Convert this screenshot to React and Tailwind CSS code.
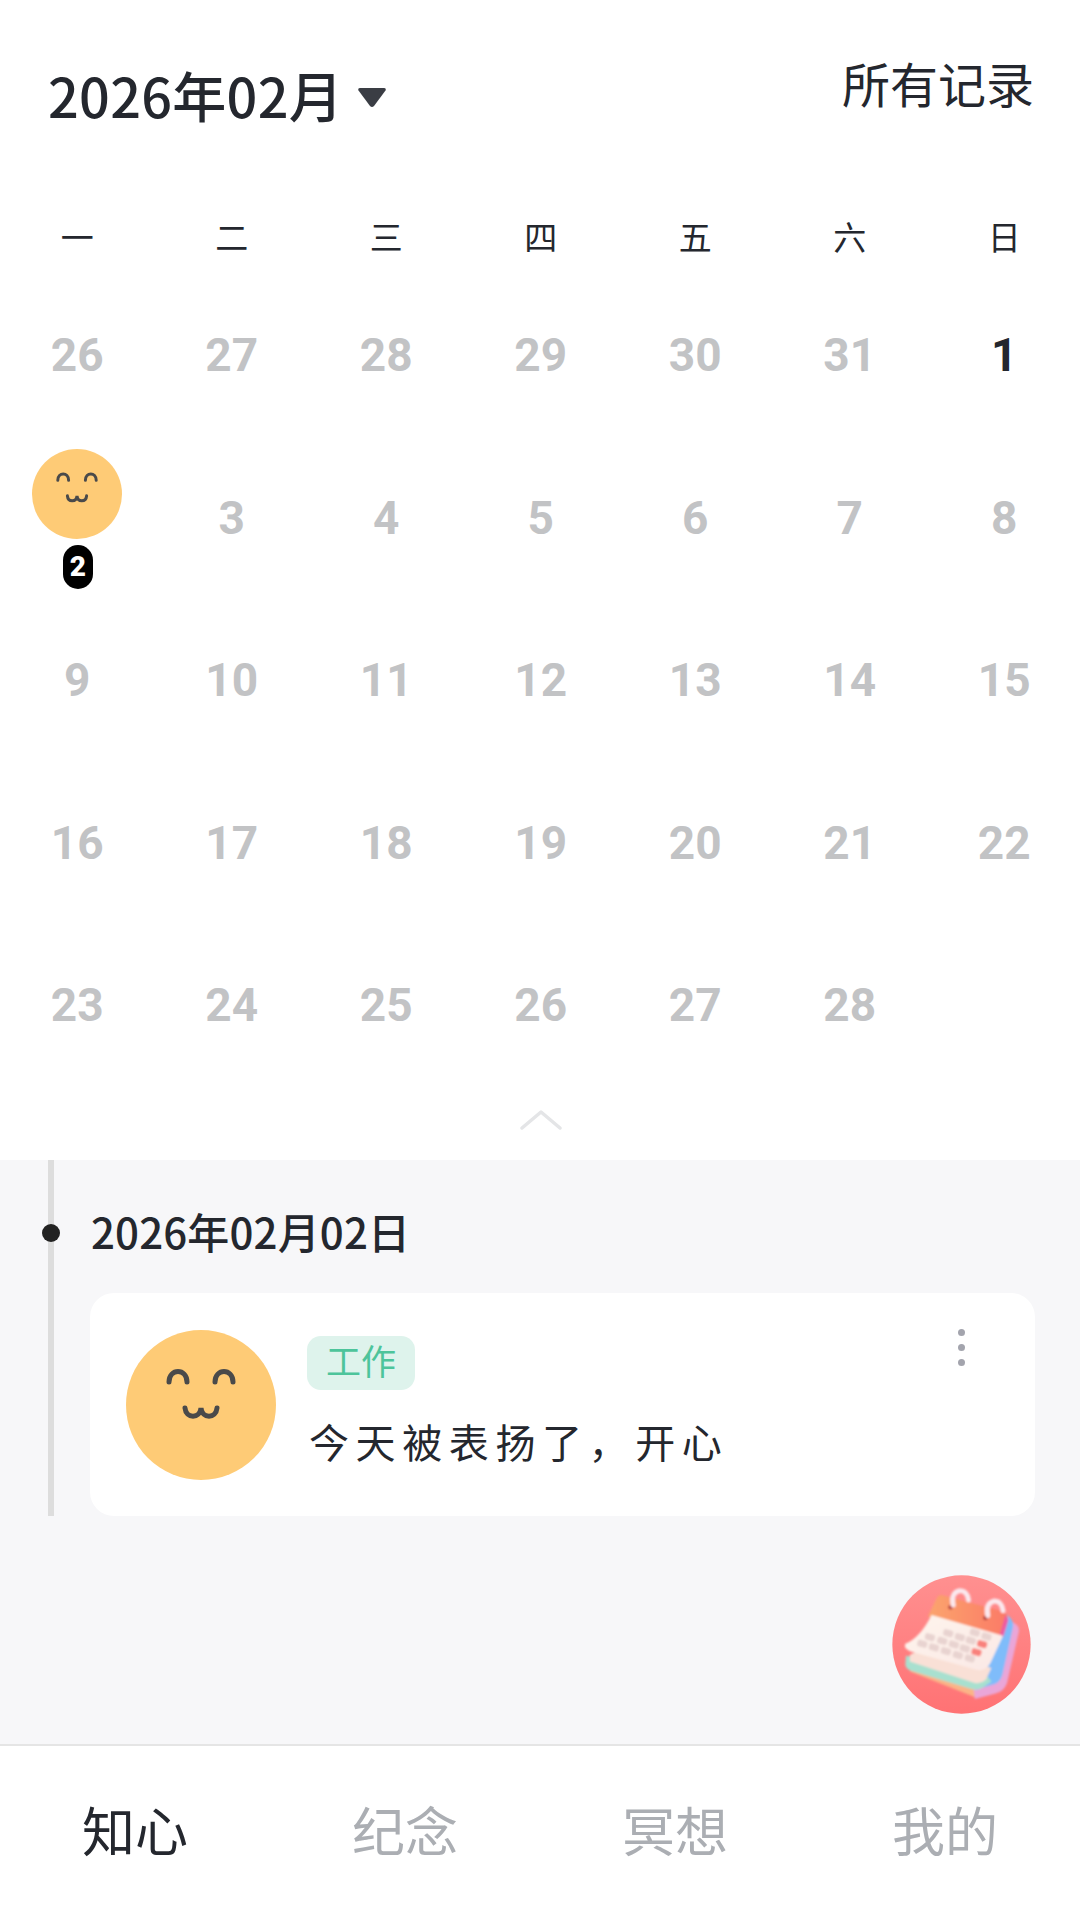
const weekdays = ["一", "二", "三", "四", "五", "六", "日"]

const days = [
  26, 27, 28, 29, 30, 31, 1,
  2, 3, 4, 5, 6, 7, 8,
  9, 10, 11, 12, 13, 14, 15,
  16, 17, 18, 19, 20, 21, 22,
  23, 24, 25, 26, 27, 28, null,
]

const tabs = ["知心", "纪念", "冥想", "我的"]

const cells = [
  [187, 282], [222, 293], [258, 304], [294, 316], [330, 326],
  [210, 262], [247, 273], [282, 284], [315, 296], [350, 307],
  [265, 250], [300, 262], [333, 272], [367, 283],
  [345, 248], [380, 260],
]

function Face({ className }) {
  return (
    <svg viewBox="0 0 150 150" className={className}>
      <circle cx="75" cy="75" r="75" fill="#fecb76" />
      <g fill="none" stroke="#4a4a4a" strokeWidth="5" strokeLinecap="round">
        <path d="M43 52c0-14 18-14 18 0" />
        <path d="M89 52c0-14 18-14 18 0" />
        <path d="M59 78c1 11 15 11 16 0c1 11 15 11 16 0" />
      </g>
    </svg>
  )
}

function CalendarFab({ className }) {
  return (
    <svg viewBox="97 75 416 418" className={className}>
      <defs>
        <linearGradient id="fabBg" x1="0" y1="0" x2="0" y2="1">
          <stop offset="0" stopColor="#ff9090" />
          <stop offset="1" stopColor="#ff7274" />
        </linearGradient>
        <linearGradient id="head" x1="0" y1="0" x2="1" y2="0">
          <stop offset="0" stopColor="#fba56e" />
          <stop offset="1" stopColor="#fb7a66" />
        </linearGradient>
        <linearGradient id="sheet" x1="0" y1="0" x2="1" y2="1">
          <stop offset="0" stopColor="#fef5ec" />
          <stop offset="1" stopColor="#fbe8e6" />
        </linearGradient>
        <filter id="soft"><feGaussianBlur stdDeviation="3" /></filter>
      </defs>
      <circle cx="305" cy="284" r="208" fill="url(#fabBg)" />
      <g filter="url(#soft)">
        <path d="M150 365L335 438Q355 450 385 432L420 412L395 370L160 330Z" fill="#fbb487" />
        <path d="M440 205L468 222Q482 232 476 252L442 400Q432 428 405 432L345 448L340 400Z" fill="#eaa6d8" />
        <path d="M438 190L452 204Q464 218 459 236L428 375Q420 402 395 406L350 420L345 380Z" fill="#7fbcfa" />
        <path d="M138 318L136 345Q138 358 155 364L335 418Q355 424 372 412L395 395L360 350Z" fill="#a8e0cf" />
        <path d="M150 315L150 335L345 400Q362 404 378 390L395 355L200 290Z" fill="#f9e0d6" />
        <path d="M245 135L425 183Q448 190 444 212L428 262L204 200L228 150Q234 134 245 135Z" fill="url(#head)" />
        <path d="M437 195L446 210L430 262L420 255Z" fill="#ef5aa0" />
        <path d="M215 195L430 258L392 340Q378 366 350 360L150 304Q130 296 136 282Q182 262 215 195Z" fill="url(#sheet)" />
        {cells.map(([x, y], i) => (
          <rect
            key={i}
            x={x - 15}
            y={y - 10}
            width="30"
            height="20"
            rx="6"
            transform={`rotate(16 ${x} ${y})`}
            fill={i === 9 || i === 13 ? "#f9817b" : "#e8d3d0"}
          />
        ))}
        <circle cx="272" cy="172" r="7" fill="#b8443f" />
        <circle cx="377" cy="204" r="7" fill="#b8443f" />
        <path d="M280 165Q272 128 300 122Q322 122 326 150" fill="none" stroke="#fbe8ee" strokeWidth="15" strokeLinecap="round" />
        <path d="M384 197Q376 160 404 153Q426 153 430 182" fill="none" stroke="#fbe8ee" strokeWidth="15" strokeLinecap="round" />
      </g>
    </svg>
  )
}

export default function App() {
  return (
    <div className="w-[1080px] h-[1920px] bg-white flex flex-col overflow-hidden font-['Noto_Sans_CJK_SC',sans-serif] text-[#24272e]">
      <div className="h-[199px] flex justify-between items-start pl-[48px] pr-[46px] pt-[46px]">
        <div className="flex items-center mt-[7px]">
          <span className="text-[54px] leading-[84px] font-medium tracking-[0.3px]">2026年02月</span>
          <svg viewBox="0 0 30 22" className="w-[30px] h-[22px] ml-[14px] mt-[4px]">
            <path d="M3 2h24q2.500 0 1.500 2.500L17 20q-2 2-4 0L1.500 4.500Q.5 2 3 2z" fill="#3a3d44" />
          </svg>
        </div>
        <span className="text-[48px] leading-[72px]">所有记录</span>
      </div>

      <div className="grid grid-cols-[repeat(7,154.5px)] h-[75px] items-center">
        {weekdays.map((d) => (
          <div key={d} className="text-center text-[33px] leading-[75px]">{d}</div>
        ))}
      </div>

      <div className="grid grid-cols-[repeat(7,154.5px)] auto-rows-[162.5px]">
        {days.map((d, i) => {
          if (d === 2) {
            return (
              <div key={i} className="flex flex-col items-center justify-center pt-[2px]">
                <Face className="w-[90px] h-[90px]" />
                <div className="w-[30px] h-[44px] mt-[6px] ml-[1px] rounded-full bg-black text-white flex items-center justify-center font-['Roboto',sans-serif] font-black text-[28px] leading-none">2</div>
              </div>
            )
          }
          return (
            <div key={i} className={`flex items-center justify-center font-['Roboto',sans-serif] font-bold text-[46px] leading-none ${d === 1 ? "text-[#24272e]" : "text-[#c2c3c5]"}`}>
              {d}
            </div>
          )
        })}
      </div>

      <div className="h-[73px] flex justify-center items-start pt-[23px] pl-[2px]">
        <svg viewBox="0 0 42 20" className="w-[42px] h-[20px]">
          <path d="M2 18L21 2L40 18" fill="none" stroke="#e4e5e7" strokeWidth="3.500" strokeLinecap="round" strokeLinejoin="round" />
        </svg>
      </div>

      <div className="relative flex-1 bg-[#f7f7f9]">
        <div className="relative ml-[48px] mr-[45px] border-l-[6px] border-[#dddddd] pl-[36px] h-[356px]">
          <div className="absolute left-[-12px] top-[64px] w-[18px] h-[18px] rounded-full bg-[#222222]" />
          <div className="h-[133px] pt-[40px] pl-[1px] text-[42px] leading-[62px] tracking-[0.15px] font-medium">2026年02月02日</div>
          <div className="relative h-[223px] bg-white rounded-[24px] flex pl-[36px] pt-[37px] gap-[31px]">
            <Face className="w-[150px] h-[150px] shrink-0" />
            <div className="flex flex-col items-start pt-[6px]">
              <div className="w-[108px] h-[54px] pb-[3px] rounded-[14px] bg-[#def3ec] text-[#4dc49b] text-[35px] leading-[48px] text-center">工作</div>
              <div className="mt-[22px] ml-[2px] text-[40px] leading-[58px] tracking-[6.6px]">今天被表扬了，开心</div>
            </div>
            <div className="absolute right-[70px] top-[36px] flex flex-col gap-[8px]">
              <div className="w-[7px] h-[7px] rounded-full bg-[#a3a4ad]" />
              <div className="w-[7px] h-[7px] rounded-full bg-[#a3a4ad]" />
              <div className="w-[7px] h-[7px] rounded-full bg-[#a3a4ad]" />
            </div>
          </div>
        </div>
        <CalendarFab className="absolute right-[49px] top-[415px] w-[139px] h-[139px]" />
      </div>

      <div className="h-[176px] bg-white border-t-2 border-[#e5e5e5] grid grid-cols-4">
        {tabs.map((t, i) => (
          <div key={t} className={`flex items-center justify-center text-[53px] leading-none pb-[8px] ${i === 0 ? "text-[#24272e]" : "text-[#abaeb3]"}`}>
            {t}
          </div>
        ))}
      </div>
    </div>
  )
}
